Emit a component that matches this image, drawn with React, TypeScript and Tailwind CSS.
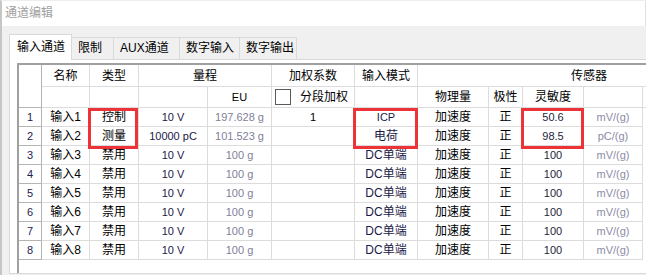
import React from "react";

interface Row {
  name: string;
  type: string;
  range: string;
  eu: string;
  weight: string;
  mode: string;
  quantity: string;
  polarity: string;
  sens: string;
  unit: string;
}

const rows: Row[] = [
  { name: "输入1", type: "控制", range: "10 V", eu: "197.628 g", weight: "1", mode: "ICP", quantity: "加速度", polarity: "正", sens: "50.6", unit: "mV/(g)" },
  { name: "输入2", type: "测量", range: "10000 pC", eu: "101.523 g", weight: "", mode: "电荷", quantity: "加速度", polarity: "正", sens: "98.5", unit: "pC/(g)" },
  ...[3, 4, 5, 6, 7, 8].map((n) => ({
    name: `输入${n}`,
    type: "禁用",
    range: "10 V",
    eu: "100 g",
    weight: "",
    mode: "DC单端",
    quantity: "加速度",
    polarity: "正",
    sens: "100",
    unit: "mV/(g)",
  })),
];

const tabs = [
  { label: "限制", w: "w-[42px]" },
  { label: "AUX通道", w: "w-[66px]" },
  { label: "数字输入", w: "w-[60px]" },
  { label: "数字输出", w: "w-[57px]" },
];

const cell = "flex items-center justify-center border-r border-b border-[#dcdcdc] shrink-0";

const App: React.FC = () => {
  return (
    <div className="relative w-[647px] h-[275px] bg-white overflow-hidden font-['Liberation_Sans','Noto_Sans_CJK_SC',sans-serif] text-[12px] text-black">
      <div className="w-[646px] h-full flex flex-col border-l-2 border-t border-l-[#c6c6c6] border-t-[#eeeeee]">
        {/* title */}
        <div className="h-[25px] shrink-0 bg-white pl-[3px] pt-[4px] leading-[16px] text-[#a0a0a0] border-r border-[#e0e0e0]">
          通道编辑
        </div>

        {/* body */}
        <div className="flex-1 min-h-0 bg-[#f0f0f0] pl-[7px] pt-[9px] pb-[1px] flex flex-col overflow-hidden">
          {/* tabs */}
          <div className="flex items-end h-[25px] shrink-0">
            <div className="relative z-10 w-[63px] h-[26px] bg-white border border-b-0 border-[#d9d9d9] flex items-center pl-[7px] pb-[2px]">
              输入通道
            </div>
            {tabs.map((t) => (
              <div
                key={t.label}
                className={`${t.w} h-[23px] bg-[#f0f0f0] border border-l-0 border-[#d9d9d9] flex items-center pl-[6px] pb-[1px]`}
              >
                {t.label}
              </div>
            ))}
          </div>

          {/* panel */}
          <div className="flex-1 min-h-0 w-[700px] shrink-0 -mt-px bg-white border border-[#d9d9d9] pl-[7px] pt-[3px] flex flex-col">
            <div className="flex-1 flex flex-col border-l-2 border-t-2 border-[#a0a0a0]">
              {/* header */}
              <div className="flex">
                <div className="w-[23px] h-[43px] shrink-0 border-r border-b border-[#b4b4b4]" />
                <div className="flex-1 flex flex-col">
                  <div className="flex h-[22px]">
                    <div className={`${cell} w-[48px]`}>名称</div>
                    <div className={`${cell} w-[49px]`}>类型</div>
                    <div className={`${cell} w-[133px]`}>量程</div>
                    <div className={`${cell} w-[83px]`}>加权系数</div>
                    <div className={`${cell} w-[63px]`}>输入模式</div>
                    <div className="flex-1 flex items-center pl-[153px] border-b border-[#dcdcdc]">传感器</div>
                  </div>
                  <div className="flex h-[21px]">
                    <div className={`${cell} w-[48px]`} />
                    <div className={`${cell} w-[49px]`} />
                    <div className={`${cell} w-[69px]`} />
                    <div className={`${cell} w-[64px] text-[11px]`}>EU</div>
                    <div className={`${cell} w-[83px] !justify-start pl-[3px] gap-[9px]`}>
                      <span className="w-[16px] h-[16px] border border-[#5a5a5a] bg-white" />
                      <span>分段加权</span>
                    </div>
                    <div className={`${cell} w-[63px]`} />
                    <div className={`${cell} w-[71px]`}>物理量</div>
                    <div className={`${cell} w-[34px]`}>极性</div>
                    <div className={`${cell} w-[61px]`}>灵敏度</div>
                    <div className={`${cell} w-[59px]`} />
                    <div className="flex-1 border-b border-[#dcdcdc]" />
                  </div>
                </div>
              </div>

              {/* data rows */}
              {rows.map((r, i) => (
                <div key={r.name} className="flex h-[19px]">
                  <div className="w-[23px] shrink-0 flex items-center justify-center border-r border-b border-[#b4b4b4] text-[11px] text-[#1c1c50]">
                    {i + 1}
                  </div>
                  <div className={`${cell} w-[48px]`}>{r.name}</div>
                  <div className={`${cell} w-[49px]`}>{r.type}</div>
                  <div className={`${cell} w-[69px] text-[11px] text-[#1a1a48]`}>{r.range}</div>
                  <div className={`${cell} w-[64px] text-[11px] text-[#80809a]`}>{r.eu}</div>
                  <div className={`${cell} w-[83px] text-[11px]`}>{r.weight}</div>
                  <div className={`${cell} w-[63px] text-[#1a1a48] ${r.mode === "ICP" ? "text-[11px]" : ""}`}>{r.mode}</div>
                  <div className={`${cell} w-[71px]`}>{r.quantity}</div>
                  <div className={`${cell} w-[34px]`}>{r.polarity}</div>
                  <div className={`${cell} w-[61px] text-[11px] text-[#1e1e3c]`}>{r.sens}</div>
                  <div className={`${cell} w-[59px] text-[11px] text-[#8c8ca6]`}>{r.unit}</div>
                  <div className="flex-1" />
                </div>
              ))}
            </div>
          </div>
        </div>
      </div>

      {/* highlight boxes */}
      <div className="absolute left-[88px] top-[108px] w-[50px] h-[41px] border-[3px] border-[#ec3338]" />
      <div className="absolute left-[353px] top-[108px] w-[65px] h-[41px] border-[3px] border-[#ec3338]" />
      <div className="absolute left-[521px] top-[108px] w-[63px] h-[41px] border-[3px] border-[#ec3338]" />
    </div>
  );
};

export default App;
